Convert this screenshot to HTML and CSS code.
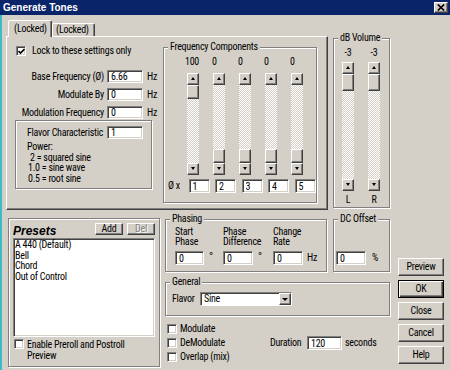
FILE: index.html
```html
<!DOCTYPE html>
<html>
<head>
<meta charset="utf-8">
<link rel="stylesheet" href="styles.css">
</head>
<body>
<div class="window">
  <div class="titlebar">
    <span class="title">Generate Tones</span>
    <span class="close-btn"><svg width="8" height="7" viewBox="0 0 8 7"><path d="M0.8 0.5 L7.2 6.5 M7.2 0.5 L0.8 6.5" stroke="#000" stroke-width="1.7" fill="none"/></svg></span>
  </div>
  <div class="client">
    <div class="top-row">
      <div class="tabs">
        <div class="tab-strip">
          <div class="tab active">(Locked)</div>
          <div class="tab">(Locked)</div>
        </div>
        <div class="tab-panel">
          <div class="left-col">
            <div class="lock-row">
              <span class="checkbox"><svg width="7" height="7" viewBox="0 0 7 7"><path d="M0.5 3 L2.5 5 L6.5 1" stroke="#000" stroke-width="1.6" fill="none"/></svg></span>
              <span class="check-text">Lock to these settings only</span>
            </div>
            <div class="param-grid">
              <span class="plabel">Base Frequency (Ø)</span><input class="tb w36" value="6.66"><span class="unit">Hz</span>
              <span class="plabel">Modulate By</span><input class="tb w36" value="0"><span class="unit">Hz</span>
              <span class="plabel">Modulation Frequency</span><input class="tb w36" value="0"><span class="unit">Hz</span>
            </div>
            <div class="etched flavor-box">
              <div class="flavor-row"><span class="flabel">Flavor Characteristic</span><input class="tb w36" value="1"></div>
              <div class="power">
                <div>Power:</div>
                <div class="in2">2 = squared sine</div>
                <div class="in1">1.0 = sine wave</div>
                <div class="in1">0.5 = root sine</div>
              </div>
            </div>
          </div>
          <div class="etched freq">
            <div class="group-label">Frequency Components</div>
            <div class="freq-vals"><span>100</span><span>0</span><span>0</span><span>0</span><span>0</span></div>
            <div class="freq-bars">
              <div class="sb fbar"><div class="sb-btn up"></div><div class="sb-track"><div class="sb-thumb"></div></div><div class="sb-btn down"></div></div>
              <div class="sb fbar"><div class="sb-btn up"></div><div class="sb-track bottom"><div class="sb-thumb"></div></div><div class="sb-btn down"></div></div>
              <div class="sb fbar"><div class="sb-btn up"></div><div class="sb-track bottom"><div class="sb-thumb"></div></div><div class="sb-btn down"></div></div>
              <div class="sb fbar"><div class="sb-btn up"></div><div class="sb-track bottom"><div class="sb-thumb"></div></div><div class="sb-btn down"></div></div>
              <div class="sb fbar"><div class="sb-btn up"></div><div class="sb-track bottom"><div class="sb-thumb"></div></div><div class="sb-btn down"></div></div>
            </div>
            <div class="freq-inputs">
              <span class="phi">Ø x</span>
              <input class="tb w21" value="1"><input class="tb w21" value="2"><input class="tb w21" value="3"><input class="tb w21" value="4"><input class="tb w21" value="5">
            </div>
          </div>
        </div>
      </div>
      <div class="etched volume">
        <div class="group-label">dB Volume</div>
        <div class="db-row db-vals"><span>-3</span><span>-3</span></div>
        <div class="db-row db-bars">
          <div class="sb dbar"><div class="sb-btn up"></div><div class="sb-track"><div class="sb-thumb tall"></div></div><div class="sb-btn down"></div></div>
          <div class="sb dbar"><div class="sb-btn up"></div><div class="sb-track"><div class="sb-thumb tall"></div></div><div class="sb-btn down"></div></div>
        </div>
        <div class="db-row db-lr"><span>L</span><span>R</span></div>
      </div>
    </div>
    <div class="bottom-row">
      <div class="etched presets">
        <div class="presets-head">
          <span class="presets-title">Presets</span>
          <span class="btn btn-sm">Add</span>
          <span class="btn btn-sm disabled">Del</span>
        </div>
        <div class="list">
          <div>A 440 (Default)</div>
          <div>Bell</div>
          <div>Chord</div>
          <div>Out of Control</div>
        </div>
        <div class="preroll-row">
          <span class="checkbox"></span>
          <span class="preroll-text">Enable Preroll and Postroll<br>Preview</span>
        </div>
      </div>
      <div class="middle">
        <div class="mid-top">
          <div class="etched phasing">
            <div class="group-label">Phasing</div>
            <div class="ph-cols">
              <div class="ph-col c1">
                <div class="ph-head"><div>Start</div><div>Phase</div></div>
                <div class="ph-inrow"><input class="tb w29" value="0"><span class="deg">°</span></div>
              </div>
              <div class="ph-col c2">
                <div class="ph-head"><div>Phase</div><div>Difference</div></div>
                <div class="ph-inrow"><input class="tb w30" value="0"><span class="deg">°</span></div>
              </div>
              <div class="ph-col c3">
                <div class="ph-head"><div>Change</div><div>Rate</div></div>
                <div class="ph-inrow"><input class="tb w30" value="0"><span class="hz">Hz</span></div>
              </div>
            </div>
          </div>
          <div class="etched dc">
            <div class="group-label">DC Offset</div>
            <div class="dc-in"><input class="tb w30" value="0"><span class="pct">%</span></div>
          </div>
        </div>
        <div class="etched general">
          <div class="group-label">General</div>
          <div class="gen-row">
            <span class="gen-label">Flavor</span>
            <div class="select"><span class="sel-text">Sine</span><span class="dd-btn"></span></div>
          </div>
        </div>
        <div class="opts">
          <div class="checks">
            <div class="check-row"><span class="checkbox"></span><span class="ctext">Modulate</span></div>
            <div class="check-row"><span class="checkbox"></span><span class="ctext">DeModulate</span></div>
            <div class="check-row"><span class="checkbox"></span><span class="ctext">Overlap (mix)</span></div>
          </div>
          <div class="duration">
            <span class="dur-label">Duration</span>
            <input class="tb w35 dur-in" value="120">
            <span class="secs">seconds</span>
          </div>
        </div>
      </div>
      <div class="buttons">
        <div class="btn">Preview</div>
        <div class="btn default">OK</div>
        <div class="btn">Close</div>
        <div class="btn">Cancel</div>
        <div class="btn">Help</div>
      </div>
    </div>
  </div>
</div>
</body>
</html>
```
FILE: styles.css
```css
* { box-sizing: border-box; }
html, body { margin: 0; padding: 0; }
body {
  width: 450px;
  height: 370px;
  overflow: hidden;
  background: #d4d0c8;
  font-family: "Roboto Condensed", "Liberation Sans Narrow", "Arial Narrow", "Liberation Sans", Arial, sans-serif;
  font-size: 10px;
  letter-spacing: -0.25px;
  line-height: 12px;
  color: #000;
}
.window {
  width: 450px;
  height: 370px;
  display: flex;
  flex-direction: column;
  background: #d4d0c8;
}
.titlebar {
  height: 15px;
  flex: none;
  background: #0a246a;
  display: flex;
  align-items: center;
  justify-content: space-between;
  padding: 0 2px 0 3px;
}
.title {
  font-family: "Liberation Sans", Arial, sans-serif;
  font-weight: bold;
  font-size: 10px;
  letter-spacing: 0;
  color: #fff;
}
.close-btn {
  width: 14px;
  height: 11px;
  background: #d4d0c8;
  border: 1px solid;
  border-color: #fff #404040 #404040 #fff;
  box-shadow: inset -1px -1px #808080;
  display: flex;
  align-items: center;
  justify-content: center;
}
.client {
  flex: 1;
  border-left: 2px solid #3cbcc4;
  display: flex;
  flex-direction: column;
}

/* shared widgets */
.etched {
  border: 1px solid #808080;
  box-shadow: inset 1px 1px #fff, 1px 1px #fff;
}
.group-label {
  width: max-content;
  height: 12px;
  margin: -7px 0 0 4px;
  padding: 0 2px;
  background: #d4d0c8;
  line-height: 12px;
}
.btn, .sb-btn, .sb-thumb, .dd-btn {
  background: #d4d0c8;
  border: 1px solid;
  border-color: #fff #404040 #404040 #fff;
  box-shadow: inset -1px -1px #808080;
}
.tb {
  font: inherit;
  letter-spacing: inherit;
  height: 13px;
  margin: 0;
  padding: 0 0 0 3px;
  border: 1px solid;
  border-color: #808080 #fff #fff #808080;
  box-shadow: inset 1px 1px #404040, inset -1px -1px #d4d0c8;
  background: #fff;
  color: #000;
  outline: none;
}
.w21 { width: 21px; height: 14px; }
.w29 { width: 29px; height: 14px; }
.w30 { width: 30px; height: 14px; }
.w35 { width: 35px; height: 14px; }
.w36 { width: 36px; }
.checkbox {
  width: 10px;
  height: 10px;
  flex: none;
  background: #fff;
  border: 1px solid;
  border-color: #808080 #fff #fff #808080;
  box-shadow: inset 1px 1px #404040, inset -1px -1px #d4d0c8;
  display: flex;
  align-items: center;
  justify-content: center;
}
.checkbox svg { display: block; }

/* top row */
.top-row {
  display: flex;
  align-items: flex-start;
  padding-left: 4px;
}
.tabs {
  width: 322px;
  margin-top: 3px;
}
.tab-strip {
  height: 18px;
  display: flex;
  align-items: flex-end;
  padding-left: 2px;
}
.tab {
  width: 43px;
  height: 13px;
  padding: 0 0 0 3px;
  border: 1px solid;
  border-bottom: none;
  border-color: #fff #404040 transparent #fff;
  box-shadow: inset -1px 0 #808080;
  border-radius: 2px 2px 0 0;
  line-height: 12px;
  background: #d4d0c8;
  white-space: nowrap;
}
.tab.active {
  width: 44px;
  height: 17px;
  margin-bottom: -1px;
  padding: 2px 0 0 5px;
  position: relative;
  z-index: 1;
}
.tab-panel {
  height: 174px;
  border: 1px solid;
  border-color: #fff #404040 #404040 #fff;
  box-shadow: inset -1px -1px #808080;
  display: flex;
  align-items: flex-start;
}
.left-col {
  width: 156px;
  flex: none;
}
.lock-row {
  display: flex;
  align-items: center;
  height: 10px;
  margin: 9px 0 0 9px;
}
.check-text { margin-left: 6px; }
.param-grid {
  display: grid;
  grid-template-columns: 100px 36px auto;
  grid-auto-rows: 13px;
  row-gap: 5px;
  align-items: center;
  margin-top: 14px;
}
.plabel { text-align: right; padding-right: 3px; white-space: nowrap; }
.unit { padding-left: 4px; }
.flavor-box {
  width: 137px;
  height: 69px;
  margin: 1px 0 0 8px;
  padding: 5px 0 0 11px;
}
.flavor-row {
  display: grid;
  grid-template-columns: 80px 36px;
  height: 13px;
  align-items: center;
}
.flabel { white-space: nowrap; }
.power {
  margin-top: 3px;
  line-height: 10.7px;
}
.power .in2 { padding-left: 3px; }
.power .in1 { padding-left: 1px; }

/* frequency components */
.freq {
  width: 154px;
  height: 156px;
  margin-top: 10px;
  flex: none;
}
.freq-vals {
  display: grid;
  grid-template-columns: 27px repeat(4, 26px);
  height: 12px;
  margin-top: 3px;
  padding-left: 21px;
}
.freq-bars {
  display: flex;
  gap: 14px;
  margin-top: 5px;
  padding-left: 23px;
}
.sb {
  width: 12px;
  display: flex;
  flex-direction: column;
}
.fbar { height: 102px; }
.dbar { height: 129px; }
.sb-btn {
  width: 12px;
  height: 12px;
  flex: none;
  display: flex;
  align-items: center;
  justify-content: center;
}
.sb-btn::after {
  content: "";
  width: 0;
  height: 0;
  border-left: 2px solid transparent;
  border-right: 2px solid transparent;
}
.sb-btn.up::after { border-bottom: 3px solid #000; margin-top: -1px; }
.sb-btn.down::after { border-top: 3px solid #000; margin-top: -1px; }
.sb-track {
  flex: 1;
  display: flex;
  flex-direction: column;
  background: repeating-conic-gradient(#d4d0c8 0 25%, #fff 0 50%) 0 0 / 2px 2px;
}
.sb-track.bottom { justify-content: flex-end; }
.sb-thumb { height: 14px; flex: none; }
.sb-thumb.tall { height: 17px; }
.freq-inputs {
  display: grid;
  grid-template-columns: 15px repeat(5, 21px);
  column-gap: 5.5px;
  margin-top: 4px;
  padding-left: 4px;
  align-items: center;
}
.phi { white-space: nowrap; margin-right: -5.5px; }

/* dB volume */
.volume {
  width: 57px;
  height: 170px;
  margin: 23px 0 0 5px;
  flex: none;
}
.db-row {
  display: grid;
  grid-template-columns: 12px 12px;
  column-gap: 14px;
  padding-left: 8px;
  margin-top: 3px;
  text-align: center;
}
.db-vals, .db-lr { height: 12px; }

/* bottom row */
.bottom-row {
  display: flex;
  align-items: flex-start;
  padding-left: 6px;
}
.presets {
  width: 152px;
  height: 149px;
  margin-top: 8px;
  padding: 0 4px;
  flex: none;
}
.presets-head {
  display: flex;
  align-items: center;
  gap: 4px;
  height: 12px;
  margin-top: 4px;
}
.presets-title {
  font-family: "Liberation Sans", Arial, sans-serif;
  font-weight: bold;
  font-style: italic;
  font-size: 12px;
  letter-spacing: 0;
  margin-right: auto;
  padding-top: 3px;
}
.btn {
  display: flex;
  align-items: center;
  justify-content: center;
  white-space: nowrap;
}
.btn-sm {
  width: 28px;
  height: 12px;
}
.btn.disabled {
  color: #808080;
  text-shadow: 1px 1px #fff;
}
.list {
  width: 142px;
  height: 99px;
  margin-top: 3px;
  padding: 1px 2px 0 1px;
  background: #fff;
  border: 1px solid;
  border-color: #808080 #fff #fff #808080;
  box-shadow: inset 1px 1px #404040, inset -1px -1px #d4d0c8;
  line-height: 10.5px;
}
.preroll-row {
  display: flex;
  align-items: flex-start;
  margin: 2px 0 0 1px;
}
.preroll-text {
  margin-left: 3px;
  line-height: 11px;
}

.middle {
  width: 225px;
  margin: 9px 0 0 5px;
  flex: none;
}
.mid-top {
  display: flex;
  gap: 6px;
}
.phasing {
  width: 162px;
  height: 53px;
}
.ph-cols {
  display: flex;
  padding-left: 9px;
  margin-top: 2px;
}
.c1 { width: 48px; }
.c2 { width: 50px; }
.ph-head {
  height: 20px;
  line-height: 10px;
  white-space: nowrap;
}
.ph-inrow {
  display: flex;
  align-items: center;
  margin-top: 4px;
  height: 14px;
}
.deg { margin-left: 5px; align-self: flex-start; line-height: 12px; font-size: 11px; }
.hz { margin-left: 4px; }
.dc {
  width: 57px;
  height: 53px;
}
.dc-in {
  display: flex;
  align-items: center;
  margin-top: 26px;
  padding-left: 2px;
}
.pct { margin-left: 6px; }
.general {
  width: 225px;
  height: 34px;
  margin-top: 10px;
}
.gen-row {
  display: flex;
  align-items: center;
  height: 14px;
  margin-top: 4px;
  padding-left: 6px;
}
.gen-label { width: 28px; }
.select {
  width: 92px;
  height: 14px;
  background: #fff;
  border: 1px solid;
  border-color: #808080 #fff #fff #808080;
  box-shadow: inset 1px 1px #404040;
  display: flex;
  align-items: center;
  justify-content: space-between;
  padding-left: 3px;
}
.dd-btn {
  width: 12px;
  height: 12px;
  display: flex;
  align-items: center;
  justify-content: center;
}
.dd-btn::after {
  content: "";
  border-left: 3px solid transparent;
  border-right: 3px solid transparent;
  border-top: 3px solid #000;
}
.opts {
  display: flex;
  align-items: center;
  margin-top: 6px;
}
.checks {
  width: 105px;
  padding-left: 2px;
}
.check-row {
  display: flex;
  align-items: center;
  height: 14px;
}
.ctext { margin-left: 3px; }
.duration {
  display: flex;
  align-items: center;
}
.dur-label { width: 37px; }
.secs { margin-left: 3px; }

.buttons {
  display: flex;
  flex-direction: column;
  gap: 4px;
  width: 46px;
  margin: 48px 0 0 8px;
  flex: none;
}
.buttons .btn { height: 18px; }
.buttons .btn.default {
  border: 1px solid #000;
  box-shadow: inset 1px 1px #fff, inset -1px -1px #404040, inset -2px -2px #808080;
}
```
